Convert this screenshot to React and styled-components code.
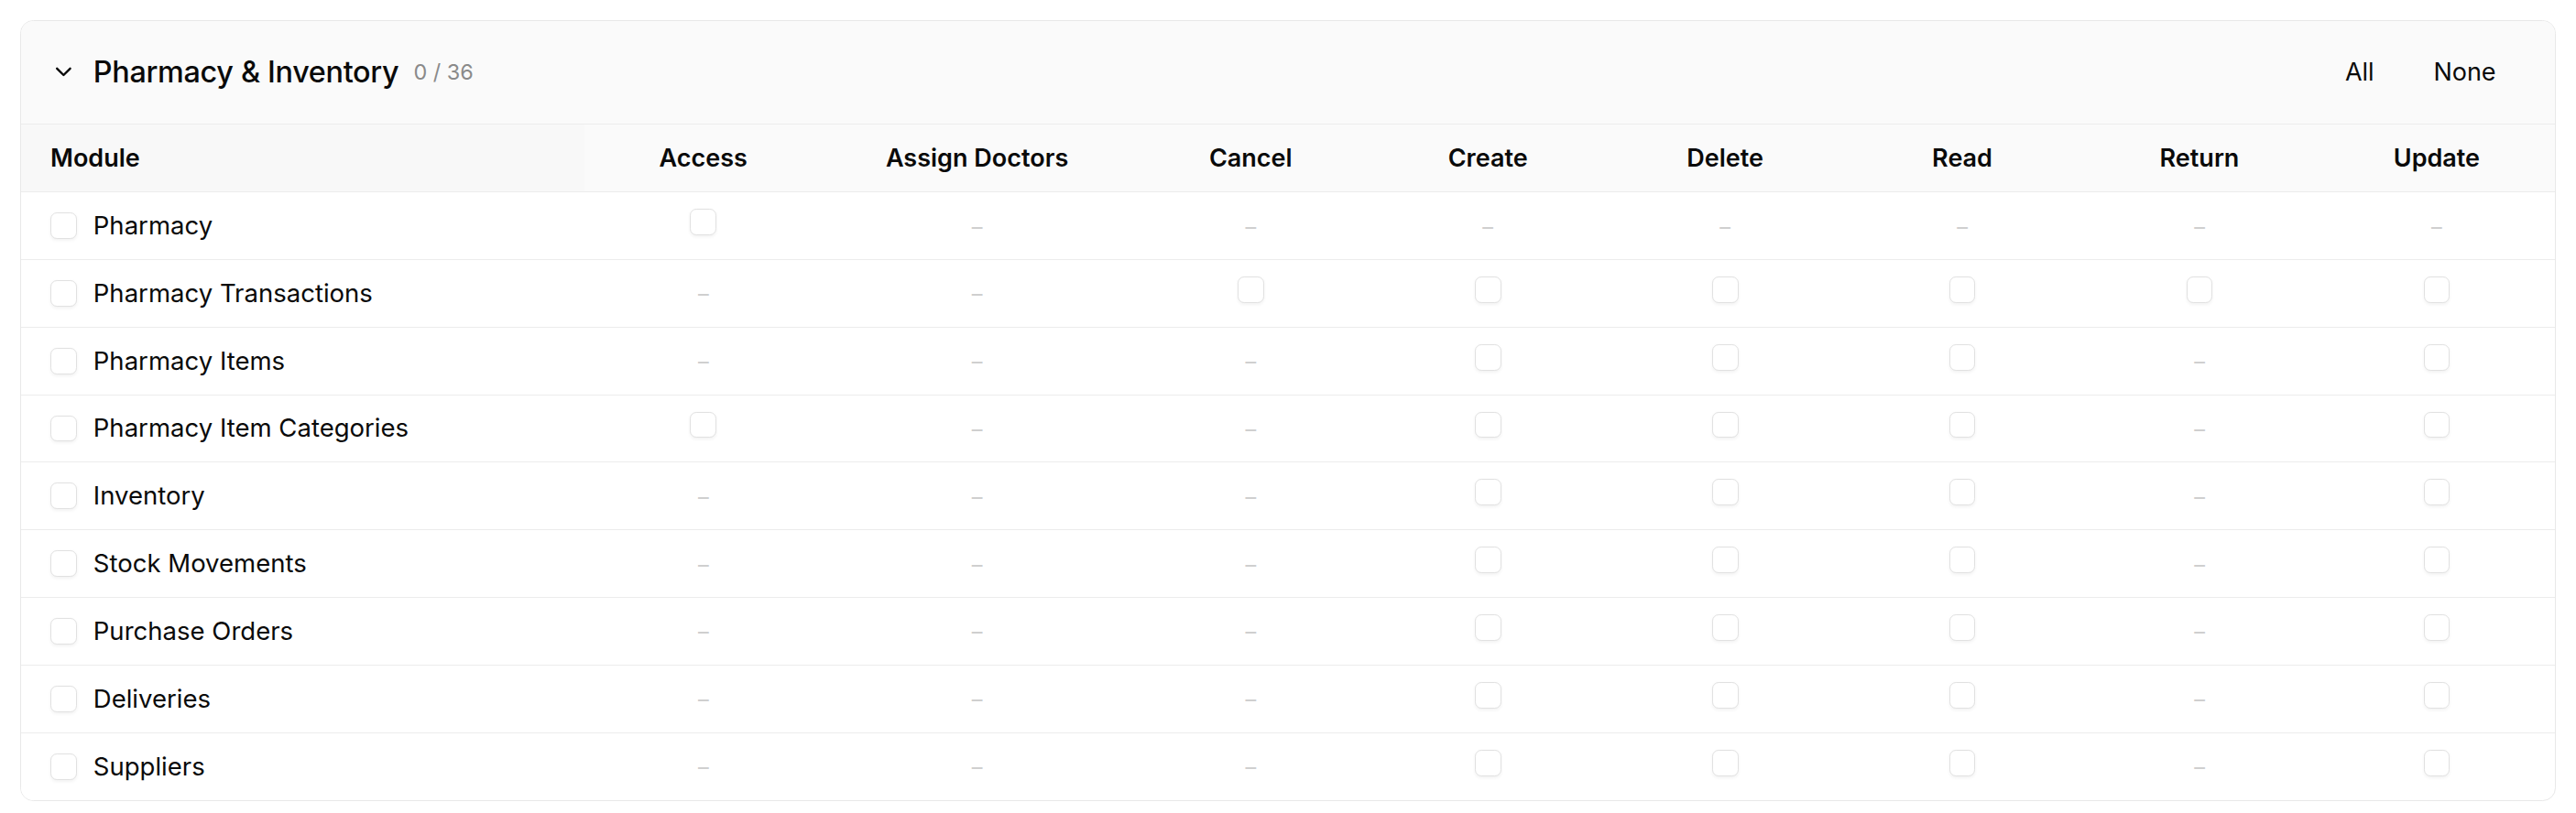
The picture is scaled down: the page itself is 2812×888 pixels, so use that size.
import React from 'react';
import styled, { createGlobalStyle } from 'styled-components';
import { ChevronDown } from 'lucide-react';

const GlobalStyle = createGlobalStyle`
  html, body { margin: 0; padding: 0; background: #ffffff; }
  body { font-family: "Inter", "Noto Sans", sans-serif; color: #0a0a0a; -webkit-font-smoothing: antialiased; }
  * { box-sizing: border-box; }
`;

const Page = styled.div`
  zoom: 1.8;
  padding: 12px;
`;

const Card = styled.section`
  border: 1px solid #e8e8e8;
  border-radius: 8px;
  overflow: hidden;
  background: #ffffff;
`;

const Header = styled.header`
  display: flex;
  align-items: center;
  justify-content: space-between;
  height: 63px;
  padding: 0 24px 0 18px;
  background: #fafafa;
  border-bottom: 1px solid #ececec;
`;

const TitleGroup = styled.div`
  display: flex;
  align-items: center;
  gap: 10px;
`;

const Toggle = styled.button`
  display: inline-flex;
  align-items: center;
  justify-content: center;
  width: 16px;
  height: 16px;
  padding: 0;
  border: 0;
  background: transparent;
  color: #0a0a0a;
  cursor: pointer;
`;

const Title = styled.h3`
  margin: 0;
  font-size: 18px;
  font-weight: 500;
  letter-spacing: -0.01em;
  color: #0a0a0a;
`;

const Count = styled.span`
  font-size: 13px;
  color: #8a8a8a;
  margin-left: -1px;
`;

const Actions = styled.div`
  display: flex;
  align-items: center;
  gap: 12px;
`;

const GhostButton = styled.button`
  height: 32px;
  padding: 0 12px;
  border: 0;
  border-radius: 6px;
  background: transparent;
  font-family: inherit;
  font-size: 15px;
  color: #0a0a0a;
  cursor: pointer;
`;

const Table = styled.table`
  width: 100%;
  border-collapse: collapse;
  table-layout: fixed;
  font-size: 15.3px;
  line-height: 24px;
`;

const HeadCell = styled.th`
  height: 41px;
  padding: 0 8px;
  font-size: 15px;
  font-weight: 600;
  color: #0a0a0a;
  text-align: ${(p) => (p.$first ? 'left' : 'center')};
  padding-left: ${(p) => (p.$first ? '18px' : '8px')};
  background: ${(p) => (p.$first ? '#f8f8f8' : '#fafafa')};
  border-bottom: 1px solid #ececec;
  vertical-align: middle;
  white-space: nowrap;
`;

const Row = styled.tr`
  & + & td { border-top: 1px solid #ececec; }
`;

const Cell = styled.td`
  height: 41px;
  padding: 0 8px;
  text-align: center;
  vertical-align: middle;
`;

const ModuleCell = styled.td`
  height: 41px;
  padding: 0 12px 0 18px;
  vertical-align: middle;
  background: #ffffff;
`;

const ModuleLabel = styled.label`
  display: flex;
  align-items: center;
  gap: 10px;
  font-size: 15.3px;
  color: #0a0a0a;
  cursor: pointer;
`;

const Box = styled.button`
  display: inline-flex;
  width: 16px;
  height: 16px;
  padding: 0;
  border: 1px solid #e1e1e1;
  border-radius: 4px;
  background: #ffffff;
  box-shadow: 0 1px 2px rgba(0, 0, 0, 0.05);
  cursor: pointer;
  flex-shrink: 0;
`;

const Dash = styled.span`
  font-size: 13px;
  color: #cfcfcf;
`;

const columns = ['Access', 'Assign Doctors', 'Cancel', 'Create', 'Delete', 'Read', 'Return', 'Update'];

const crud = ['Create', 'Delete', 'Read', 'Update'];

const modules = [
  { name: 'Pharmacy', perms: ['Access'] },
  { name: 'Pharmacy Transactions', perms: ['Cancel', 'Create', 'Delete', 'Read', 'Return', 'Update'] },
  { name: 'Pharmacy Items', perms: crud },
  { name: 'Pharmacy Item Categories', perms: ['Access', ...crud] },
  { name: 'Inventory', perms: crud },
  { name: 'Stock Movements', perms: crud },
  { name: 'Purchase Orders', perms: crud },
  { name: 'Deliveries', perms: crud },
  { name: 'Suppliers', perms: crud },
];

const total = modules.reduce((n, m) => n + m.perms.length, 0);

export default function App() {
  return (
    <>
      <GlobalStyle />
      <Page>
        <Card>
          <Header>
            <TitleGroup>
              <Toggle aria-label="Collapse">
                <ChevronDown size={16} strokeWidth={2} />
              </Toggle>
              <Title>Pharmacy &amp; Inventory</Title>
              <Count>0 / {total}</Count>
            </TitleGroup>
            <Actions>
              <GhostButton>All</GhostButton>
              <GhostButton>None</GhostButton>
            </Actions>
          </Header>
          <Table>
            <colgroup>
              <col style={{ width: 342 }} />
              <col style={{ width: 144 }} />
              <col style={{ width: 188 }} />
              {columns.slice(2).map((c) => (
                <col key={c} />
              ))}
            </colgroup>
            <thead>
              <tr>
                <HeadCell $first>Module</HeadCell>
                {columns.map((c) => (
                  <HeadCell key={c}>{c}</HeadCell>
                ))}
              </tr>
            </thead>
            <tbody>
              {modules.map((m) => (
                <Row key={m.name}>
                  <ModuleCell>
                    <ModuleLabel>
                      <Box role="checkbox" aria-checked="false" />
                      {m.name}
                    </ModuleLabel>
                  </ModuleCell>
                  {columns.map((c) => (
                    <Cell key={c}>
                      {m.perms.includes(c) ? <Box role="checkbox" aria-checked="false" /> : <Dash>–</Dash>}
                    </Cell>
                  ))}
                </Row>
              ))}
            </tbody>
          </Table>
        </Card>
      </Page>
    </>
  );
}
